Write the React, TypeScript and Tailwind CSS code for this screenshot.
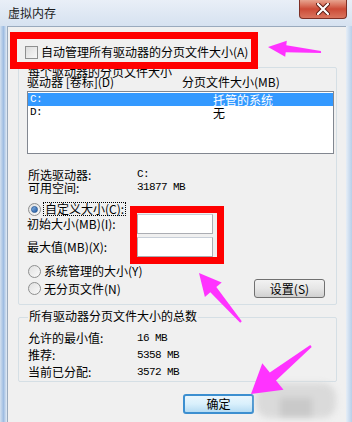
import React from 'react';

const mono = "font-['Liberation_Mono',monospace] text-[11px] tracking-[-0.6px]";

const Radio: React.FC<{ checked?: boolean }> = ({ checked }) => (
  <span className="w-[13px] h-[13px] rounded-full border border-[#8e8f8f] bg-gradient-to-br from-[#e0e0e0] to-[#fafafa] flex items-center justify-center shrink-0">
    {checked && (
      <span className="w-[7px] h-[7px] rounded-full bg-gradient-to-br from-[#8ab5e6] to-[#1f5aa0] border border-[#2c5e9c]" />
    )}
  </span>
);

const ValueRow: React.FC<{ label: string; value: string }> = ({ label, value }) => (
  <div className="flex items-center h-[17px] leading-[14px]">
    <span className="w-[109px]">{label}</span>
    <span className={mono}>{value}</span>
  </div>
);

const CloseButton: React.FC = () => (
  <div className="self-start mr-[5px] w-[48px] h-[19px] rounded-b-[4px] border border-t-0 border-[#7d2f25] bg-gradient-to-b from-[#e7a38f] via-[#cc4a36] to-[#d9745e] flex items-center justify-center">
    <svg width="14" height="12" viewBox="0 0 14 12">
      <path d="M2 1 L12 11 M12 1 L2 11" stroke="#5a1a12" strokeWidth="4" strokeLinecap="round" />
      <path d="M2 1 L12 11 M12 1 L2 11" stroke="#ffffff" strokeWidth="2.2" strokeLinecap="round" />
    </svg>
  </div>
);

const App: React.FC = () => {
  return (
    <div className="relative w-[352px] h-[422px] overflow-hidden bg-[#c9d9ec] font-['Noto_Sans_CJK_SC',sans-serif] text-[12px] leading-[14px] text-black">
      {/* title bar */}
      <div className="h-[26px] flex items-center justify-between bg-gradient-to-b from-[#e9eff7] to-[#d6e2f0]">
        <span className="pl-[8px] text-[#1b1b1b]">虚拟内存</span>
        <CloseButton />
      </div>

      <div className="flex h-[396px]">
        {/* left frame */}
        <div className="w-[7px] bg-gradient-to-r from-[#d3e0ef] via-[#9fbde2] to-[#e3ecf6]" />

        {/* client area */}
        <div className="w-[339px] bg-[#f0f0f0] border-l border-t border-[#9aaabd] flex flex-col">
          {/* auto manage checkbox */}
          <div className="mt-[18px] ml-[17px] h-[14px] flex items-center">
            <span className="w-[13px] h-[13px] border border-[#8e8f8f] bg-gradient-to-br from-[#dcdcdc] to-[#f7f7f7]" />
            <span className="ml-[3px]">自动管理所有驱动器的分页文件大小(A)</span>
          </div>

          {/* per-drive group */}
          <div className="mt-[8px] ml-[10px] w-[319px] h-[238px] border border-[#d5dfe5] rounded-[2px] flex flex-col pl-[8px] pr-[2px]">
            <span className="-mt-[1px] h-[10px] leading-[10px] self-start px-[1px] bg-[#f0f0f0]">每个驱动器的分页文件大小</span>
            <div className="h-[10px] leading-[10px] flex">
              <span className="w-[155px]">驱动器 [卷标](D)</span>
              <span>分页文件大小(MB)</span>
            </div>
            <div className="mt-[4px] h-[63px] border border-[#828790] bg-white pt-[1px] leading-[13px]">
              <div className="h-[13px] grid grid-cols-[183px_1fr] items-center bg-[#3399ff] text-white pl-[2px]">
                <span className={mono}>C:</span>
                <span>托管的系统</span>
              </div>
              <div className="h-[13px] grid grid-cols-[183px_1fr] items-center pl-[2px]">
                <span className={mono}>D:</span>
                <span>无</span>
              </div>
            </div>

            <div className="mt-[14px] pl-[1px] leading-[13px]">
              <div className="flex items-center h-[13px]">
                <span className="w-[109px]">所选驱动器:</span>
                <span className={mono}>C:</span>
              </div>
              <div className="flex items-center h-[13px]">
                <span className="w-[109px]">可用空间:</span>
                <span className={mono}>31877 MB</span>
              </div>
            </div>

            <div className="mt-[8px] h-[14px] pl-[1px] flex items-center">
              <Radio checked />
              <span className="ml-[2px] px-[1px] border border-dotted border-black leading-[12px]">自定义大小(C):</span>
            </div>
            <div className="flex items-center h-[20px] -mt-[2px]">
              <span className="w-[110px]">初始大小(MB)(I):</span>
              <span className="w-[76px] h-[20px] border border-[#abadb3] border-t-[#c8cfd8] bg-white" />
            </div>
            <div className="flex items-center h-[20px] mt-[3px]">
              <span className="w-[110px]">最大值(MB)(X):</span>
              <span className="w-[76px] h-[20px] border border-[#abadb3] border-t-[#c8cfd8] bg-white" />
            </div>

            <div className="mt-[7px] h-[14px] pl-[1px] flex items-center">
              <Radio />
              <span className="ml-[3px]">系统管理的大小(Y)</span>
            </div>
            <div className="mt-[1px] h-[19px] pl-[1px] flex items-center justify-between pr-[9px]">
              <div className="flex items-center">
                <Radio />
                <span className="ml-[3px]">无分页文件(N)</span>
              </div>
              <button className="w-[71px] h-[19px] rounded-[3px] border border-[#707070] bg-gradient-to-b from-[#f2f2f2] via-[#e6e6e6] to-[#d0d0d0] text-[12px] leading-[12px]">
                设置(S)
              </button>
            </div>
          </div>

          {/* totals group */}
          <div className="mt-[12px] ml-[10px] w-[319px] h-[65px] border border-[#d5dfe5] rounded-[2px] flex flex-col pl-[9px]">
            <span className="-mt-[8px] h-[12px] leading-[12px] self-start px-[1px] bg-[#f0f0f0]">所有驱动器分页文件大小的总数</span>
            <div className="mt-[7px]">
              <ValueRow label="允许的最小值:" value="16 MB" />
              <ValueRow label="推荐:" value="5358 MB" />
              <ValueRow label="当前已分配:" value="3572 MB" />
            </div>
          </div>

          {/* dialog buttons */}
          <div className="flex items-start">
            <button className="mt-[12px] ml-[175px] w-[71px] h-[20px] rounded-[3px] border-2 border-[#3c8fd0] bg-gradient-to-b from-[#eaf6fd] via-[#d9f0fc] to-[#b6dcf3] text-[12px] leading-[12px]">
              确定
            </button>
            <div className="mt-[1px] ml-[2px] w-[80px] h-[35px] rounded-[14px] bg-[#dadada] blur-[3px] flex items-end justify-center">
              <span className="w-[32px] h-[20px] bg-[#c9c9c9]" />
            </div>
          </div>
        </div>

        {/* right frame */}
        <div className="w-[6px] bg-gradient-to-r from-[#e6eef7] to-[#b8cfe9]" />
      </div>

      {/* red highlight boxes */}
      <div className="absolute left-[10px] top-[32px] w-[248px] h-[37px] border-[7px] border-[#ff0000]" />
      <div className="absolute left-[130px] top-[206px] w-[94px] h-[58px] border-[7px] border-[#ff0000]" />

      {/* magenta arrows */}
      <svg className="absolute inset-0 pointer-events-none" width="352" height="422" viewBox="0 0 352 422">
        <polygon
          points="268,47 286.8,40.7 286.3,45.2 320.9,51 321.1,53 285.7,52.2 285.2,56.7"
          fill="#ff33ff"
        />
        <polygon
          points="199,273 221.7,282.5 216.3,287.1 241.8,321.3 240.2,322.7 210.3,292.3 204.9,296.9"
          fill="#ff33ff"
        />
        <polygon
          points="251,394 262.3,363.2 269.8,372.6 310.3,345.1 311.7,346.9 276,380.4 283.5,389.8"
          fill="#ff33ff"
        />
      </svg>
    </div>
  );
};

export default App;
